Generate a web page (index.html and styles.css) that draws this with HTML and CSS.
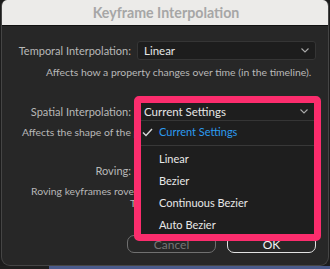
FILE: index.html
```html
<!DOCTYPE html>
<html lang="en">
<head>
  <meta charset="UTF-8" />
  <title>Keyframe Interpolation</title>
  <link rel="stylesheet" href="styles.css">
</head>
<body>
  <div class="dialog">
    <div class="titlebar">Keyframe Interpolation</div>
    <div class="form">
      <div class="row">
        <label>Temporal Interpolation:</label>
        <div class="select">
          <span>Linear</span>
          <svg class="chevron" width="8" height="5" viewBox="0 0 8 5"><polyline points="0.5,0.5 4,4 7.5,0.5" /></svg>
        </div>
      </div>
      <div class="desc desc-temporal">Affects how a property changes over time (in the timeline).</div>

      <div class="row row-spatial">
        <label>Spatial Interpolation:</label>
        <div class="select">
          <span>Current Settings</span>
        </div>
      </div>
      <div class="desc desc-spatial">Affects the shape of the path in the Composition panel.</div>

      <div class="row row-roving">
        <label>Roving:</label>
        <div class="select"><span>Current Settings</span></div>
      </div>
      <div class="desc desc-roving">
        <div class="line1">Roving keyframes rove in time to smooth out speed.</div>
        <div class="line2">The first and last keyframes cannot rove.</div>
      </div>

      <div class="actions">
        <button class="btn btn-cancel">Cancel</button>
        <button class="btn btn-ok">OK</button>
      </div>
    </div>

    <div class="popup">
      <div class="popup-head">
        <span>Current Settings</span>
        <svg class="chevron" width="8" height="5" viewBox="0 0 8 5"><polyline points="0.5,0.5 4,4 7.5,0.5" /></svg>
      </div>
      <ul class="menu">
        <li class="selected">
          <svg class="check" width="11" height="9" viewBox="0 0 11 9"><polyline points="1,4.5 4,7.5 10,1" /></svg>
          Current Settings
        </li>
        <li class="sep"></li>
        <li>Linear</li>
        <li>Bezier</li>
        <li>Continuous Bezier</li>
        <li>Auto Bezier</li>
      </ul>
    </div>
  </div>
  <div class="taskbar">
    <div class="taskbar-left"></div>
    <div class="taskbar-right"></div>
  </div>
</body>
</html>
```

FILE: styles.css
```css
:root {
  --panel: #272727;
  --field: #1d1d1d;
  --label: #b8b8b8;
  --pink: #fb2d6d;
  --blue: #2c9bf0;
}

* {
  margin: 0;
  padding: 0;
  box-sizing: border-box;
}

body {
  background: #1c1c1c;
  font-family: Lato, sans-serif;
  font-size: 11px;
  color: var(--label);
  width: 330px;
  height: 269px;
  overflow: hidden;
}

.dialog {
  position: relative;
  margin-left: 1px;
  width: 328px;
  height: 266px;
  background: var(--panel);
  border: 1px solid #454545;
  border-top: none;
  border-radius: 6px 6px 9px 9px;
  overflow: hidden;
}

.titlebar {
  height: 26px;
  background: #ecebe9;
  border-bottom: 1px solid #111;
  color: #a6a6a6;
  font-weight: bold;
  font-size: 14.2px;
  text-align: center;
  line-height: 25px;
  padding-left: 2px;
}

.form {
  padding-top: 15px;
}

.row {
  display: grid;
  grid-template-columns: 129px 179px;
  column-gap: 6px;
  align-items: center;
  height: 19px;
}

.row label {
  text-align: right;
  white-space: nowrap;
}

.select {
  height: 19px;
  background: var(--field);
  border: 1px solid #353535;
  border-radius: 3px;
  color: #e6e6e6;
  font-size: 11.5px;
  padding-left: 6px;
  display: flex;
  align-items: center;
  justify-content: space-between;
  padding-right: 6px;
}

.chevron polyline {
  fill: none;
  stroke: #a8a8a8;
  stroke-width: 1.1;
}

.desc {
  white-space: nowrap;
  overflow: hidden;
  font-size: 10.4px;
  line-height: 14px;
}

.desc-temporal {
  margin-top: 5px;
  padding-left: 44px;
}

.row-spatial {
  margin-top: 23px;
}

.desc-spatial {
  margin-top: 4px;
  padding-left: 20px;
}

.row-roving {
  margin-top: 22px;
}

.desc-roving {
  margin-top: 5px;
  line-height: 12px;
}

.desc-roving .line1 {
  padding-left: 29px;
}

.desc-roving .line2 {
  padding-left: 128px;
}

.actions {
  display: flex;
  justify-content: flex-end;
  gap: 11px;
  padding-right: 12px;
  margin-top: 26px;
}

.btn {
  width: 89px;
  height: 18px;
  border-radius: 7px;
  background: transparent;
  font-family: Lato, sans-serif;
  font-size: 12px;
}

.btn-cancel {
  border: 1px solid #707070;
  color: #767676;
}

.btn-ok {
  border: 1px solid #e2e2e2;
  color: #f2f2f2;
}

/* annotated dropdown menu, drawn over the form */
.popup {
  position: absolute;
  left: 132px;
  top: 96px;
  width: 187px;
  height: 145px;
  border: 7px solid var(--pink);
  border-radius: 5px;
  background: #1e1e1e;
  overflow: hidden;
}

.popup-head {
  height: 18px;
  border-bottom: 1px solid #353535;
  color: #e6e6e6;
  font-size: 11.5px;
  display: flex;
  align-items: center;
  justify-content: space-between;
  padding: 0 6px 0 3px;
}

.menu {
  list-style: none;
  font-size: 11px;
  color: #e8e8e8;
}

.menu li {
  height: 22px;
  line-height: 22px;
  padding-left: 18px;
  position: relative;
}

.menu li.selected {
  color: var(--blue);
}

.menu li.sep {
  height: 1px;
  background: #383838;
  margin: 2px 0 2px;
}

.check {
  position: absolute;
  left: 1px;
  top: 7px;
}

.check polyline {
  fill: none;
  stroke: #d8d8d8;
  stroke-width: 1.4;
}

.taskbar {
  display: flex;
  height: 3px;
}

.taskbar-left {
  width: 49px;
  background: #1f1f1f;
}

.taskbar-right {
  flex: 1;
  background: #4a5b8c;
}
```
